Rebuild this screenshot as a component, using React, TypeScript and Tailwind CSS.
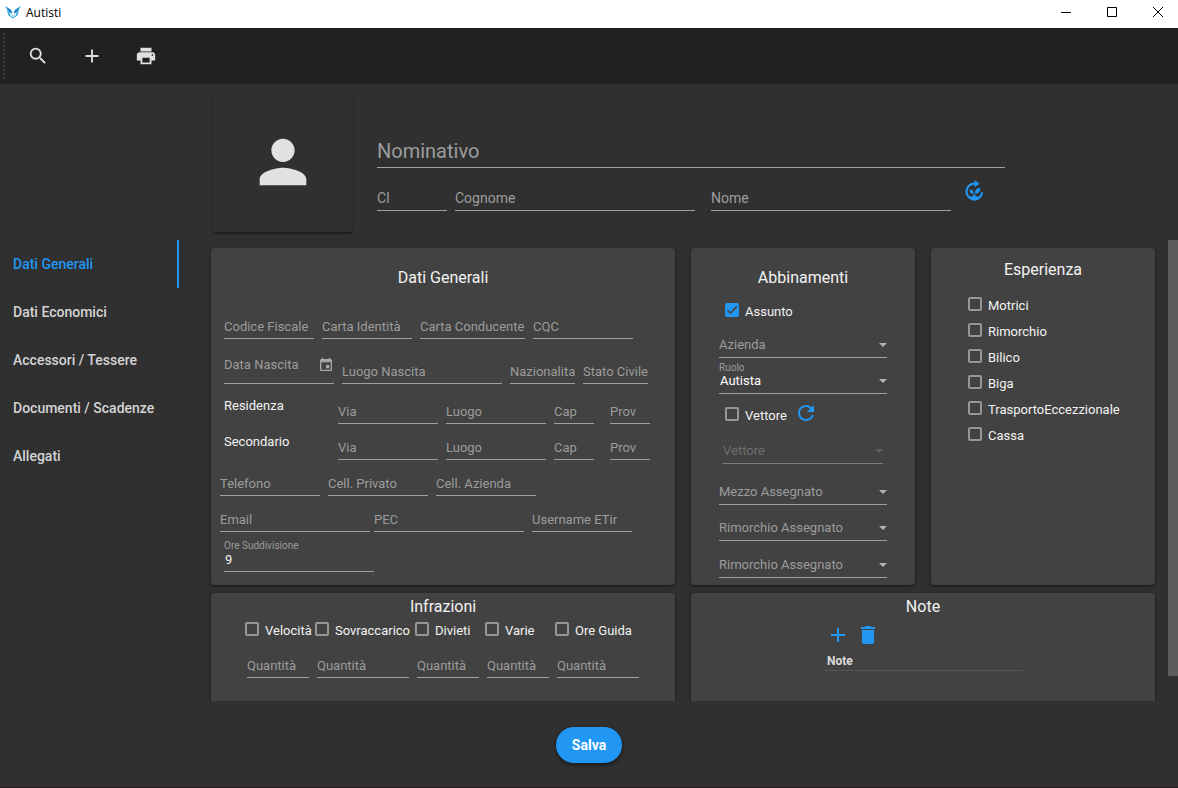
import { useState, type ReactNode } from "react";
import { MdAdd, MdDelete, MdEvent, MdPerson, MdPrint, MdRefresh, MdSearch } from "react-icons/md";

const sections = [
  "Dati Generali",
  "Dati Economici",
  "Accessori / Tessere",
  "Documenti / Scadenze",
  "Allegati",
];

const experiences = ["Motrici", "Rimorchio", "Bilico", "Biga", "TrasportoEccezzionale", "Cassa"];

const infractions = ["Velocità", "Sovraccarico", "Divieti", "Varie", "Ore Guida"];

function Field({ label, name, className = "" }: { label: string; name?: string; className?: string }) {
  return (
    <input
      type="text"
      aria-label={name ?? label}
      placeholder={label}
      className={`h-[23px] min-w-0 border-b border-[#a0a0a0] bg-transparent pb-0.5 leading-5 text-white outline-none placeholder:text-[#9c9c9c] placeholder:opacity-100 ${className}`}
    />
  );
}

function Check({ label, defaultChecked = false }: { label: string; defaultChecked?: boolean }) {
  return (
    <label className="flex items-center gap-1.5 whitespace-nowrap pt-0.5 leading-[18px]">
      <span className="mb-1 grid">
        <input
          type="checkbox"
          defaultChecked={defaultChecked}
          className="peer col-start-1 row-start-1 size-3.5 appearance-none rounded-xs border-2 border-[#969696] checked:border-[#2196f3] checked:bg-[#2196f3]"
        />
        <svg
          viewBox="0 0 14 14"
          fill="none"
          stroke="#424242"
          strokeWidth="1.6"
          className="pointer-events-none invisible col-start-1 row-start-1 size-3.5 peer-checked:visible"
        >
          <path d="M2.5 7.2 5.4 10.2 11.8 3.6" />
        </svg>
      </span>
      {label}
    </label>
  );
}

function Picker({
  label,
  value,
  name,
  disabled = false,
}: {
  label: string;
  value?: string;
  name: string;
  disabled?: boolean;
}) {
  return (
    <div
      className={`flex flex-col border-b ${
        disabled ? "mx-1 border-[#7c7c7c] text-[#6f6f6f]" : "border-[#a0a0a0] text-[#9c9c9c]"
      }`}
    >
      {value && (
        <label htmlFor={name} className="-mb-0.5 text-[10px] leading-[10px]">
          {label}
        </label>
      )}
      <div className="grid items-center">
        <select
          id={name}
          disabled={disabled}
          aria-label={value ? undefined : name}
          className={`col-start-1 row-start-1 h-[22px] appearance-none bg-transparent pb-0.5 leading-5 outline-none disabled:opacity-100 ${
            value ? "pl-px text-white" : ""
          }`}
        >
          <option>{value ?? label}</option>
        </select>
        <svg
          viewBox="0 0 8 4"
          className="pointer-events-none col-start-1 row-start-1 mb-0.5 h-1 w-2 justify-self-end"
          fill={disabled ? "#5c6468" : "#b4b4b4"}
        >
          <path d="M0 0h8L4 4z" />
        </svg>
      </div>
    </div>
  );
}

function Card({ title, className = "", children }: { title: string; className?: string; children: ReactNode }) {
  return (
    <section className={`rounded-sm bg-[#424242] shadow-[0_1px_3px_rgba(0,0,0,0.55)] ${className}`}>
      <h2 className="text-center text-base leading-7">{title}</h2>
      {children}
    </section>
  );
}

function Address({ title }: { title: string }) {
  return (
    <>
      <span className="w-[114px] pb-2 leading-5">{title}</span>
      <Field label="Via" name={`${title} via`} className="mr-2 w-[100px]" />
      <Field label="Luogo" name={`${title} luogo`} className="mr-2 w-[100px]" />
      <Field label="Cap" name={`${title} cap`} className="mr-4 w-10" />
      <Field label="Prov" name={`${title} provincia`} className="w-10" />
    </>
  );
}

function SproutCycle() {
  return (
    <svg viewBox="0 0 19 21" className="h-[21px] w-[19px]" fill="currentColor">
      <path
        d="M9.8 3.6A7.9 7.9 0 1 0 17.2 12.4"
        fill="none"
        stroke="currentColor"
        strokeWidth="2.2"
      />
      <path d="M9.6 0 14.4 3.7 9.6 7.4z" />
      <path d="M3.2 16.4h4.2q1.1-.2 1.1-2.2h1.7q0 2 1.1 2.2h4.2Q13 20.4 9.3 20.4T3.2 16.4z" />
      <path d="M4.6 9.4q4-.1 4.3 4.4-4.3.2-4.3-4.4z" />
      <path d="M15.3 7.7q.5 6-5.4 6.1-.2-6 5.4-6.1z" />
    </svg>
  );
}

function TitleBar() {
  return (
    <header className="flex h-7 shrink-0 items-center bg-white text-black">
      <svg viewBox="0 0 16 13" className="mb-1 ml-[5px] h-[13px] w-4">
        <path d="M0 0 5.6 3.6 7.4 6.2 6.2 7.4 4.2 6.2z" fill="#1b86cf" />
        <path d="M16 0 10.4 3.6 8.6 6.2 9.8 7.4 11.8 6.2z" fill="#1b86cf" />
        <path d="M1.6 3.4 4.2 6.2 5.4 9.8 8 11.2 10.6 9.8 11.8 6.2 14.4 3.4 12.4 9.4 8 12.4 3.6 9.4z" fill="#2fa3dc" />
        <path d="M5.4 7.2 8 9.2 10.6 7.2 10 9.8 8 11.2 6 9.8z" fill="#a9def3" />
      </svg>
      <h1 className="ml-[5px] flex-1 pb-0.5 font-['Open_Sans',sans-serif] text-xs">Autisti</h1>
      <div className="flex gap-1.5">
        <button aria-label="Riduci" className="flex h-7 w-10 items-center justify-center">
          <svg viewBox="0 0 10 10" className="mb-1 size-2.5" stroke="#000" fill="none">
            <path d="M0 5.5h10" />
          </svg>
        </button>
        <button aria-label="Ingrandisci" className="flex h-7 w-10 items-center justify-center">
          <svg viewBox="0 0 10 10" className="mb-1 size-2.5" stroke="#000" fill="none">
            <path d="M.5.5h9v9h-9z" />
          </svg>
        </button>
        <button aria-label="Chiudi" className="flex h-7 w-10 items-center justify-center">
          <svg viewBox="0 0 10 10" className="mb-1 size-2.5" stroke="#000" fill="none">
            <path d="m0 0 10 10M10 0 0 10" />
          </svg>
        </button>
      </div>
    </header>
  );
}

export default function App() {
  const [active, setActive] = useState(sections[0]);

  return (
    <div className="flex h-screen flex-col bg-[#303030] font-['Roboto',sans-serif] text-[13px] text-[#f2f2f2]">
      <TitleBar />

      <div role="toolbar" className="flex h-14 shrink-0 items-center bg-[#212121] text-[#e0e0e0]">
        <div className="ml-[3px] mr-1.5 h-[46px] w-0.5 bg-[repeating-linear-gradient(to_bottom,#404040_0,#404040_2px,transparent_2px,transparent_4px)]" />
        <button aria-label="Cerca" className="flex h-14 w-[54px] items-center justify-center">
          <MdSearch className="size-[22px]" />
        </button>
        <button aria-label="Aggiungi" className="flex h-14 w-[54px] items-center justify-center">
          <MdAdd className="size-[22px]" />
        </button>
        <button aria-label="Stampa" className="flex h-14 w-[54px] items-center justify-center">
          <MdPrint className="size-[22px]" />
        </button>
      </div>

      <div className="flex shrink-0 gap-6 pb-2 pl-[213px] pt-2">
        <div className="flex size-[140px] items-center justify-center rounded-sm text-[#e2e2e2] shadow-[0_2px_2px_rgba(0,0,0,0.4)]">
          <MdPerson className="size-[70px]" />
        </div>
        <div className="flex flex-col pt-11 text-sm">
          <input
            type="text"
            aria-label="Nominativo"
            placeholder="Nominativo"
            className="h-8 w-[628px] border-b border-[#a0a0a0] bg-transparent pb-0.5 text-xl leading-7 outline-none placeholder:text-[#9c9c9c] placeholder:opacity-100"
          />
          <div className="flex h-[43px] items-end">
            <Field label="CI" className="mr-2 w-[70px]" />
            <Field label="Cognome" className="mr-4 w-60" />
            <Field label="Nome" className="mr-3.5 w-60" />
            <button aria-label="Rigenera" className="mb-2.5 text-[#2196f3]">
              <SproutCycle />
            </button>
          </div>
        </div>
      </div>

      <div className="flex min-h-0 flex-1">
        <nav className="flex w-[179px] shrink-0 flex-col">
          {sections.map((s) => (
            <button
              key={s}
              onClick={() => setActive(s)}
              className={`h-12 border-r-2 pl-[13px] text-left text-sm font-medium ${
                s === active ? "border-[#2196f3] text-[#2196f3]" : "border-transparent text-[#d4d4d4]"
              }`}
            >
              {s}
            </button>
          ))}
        </nav>

        <main className="grid min-w-0 flex-1 grid-cols-[464fr_224fr_224fr] content-start gap-x-4 gap-y-2 overflow-hidden pl-8 pr-[13px] pt-2">
          <Card title="Dati Generali" className="px-[9px] pb-[13px] pt-4">
            <div className="flex h-[47px] items-end gap-2 pl-1">
              <Field label="Codice Fiscale" className="w-[90px]" />
              <Field label="Carta Identità" className="w-[90px]" />
              <Field label="Carta Conducente" className="w-[105px]" />
              <Field label="CQC" className="w-[100px]" />
            </div>
            <div className="flex h-[45px] items-end gap-2 pl-1">
              <div className="flex w-[110px] items-center border-b border-[#a0a0a0] pb-2">
                <input
                  type="text"
                  aria-label="Data Nascita"
                  placeholder="Data Nascita"
                  className="min-w-0 flex-1 bg-transparent leading-5 outline-none placeholder:text-[#9c9c9c] placeholder:opacity-100"
                />
                <button aria-label="Apri calendario" className="text-[#a6a6a6]">
                  <MdEvent className="size-4" />
                </button>
              </div>
              <Field label="Luogo Nascita" className="w-40" />
              <Field label="Nazionalita" className="w-[65px]" />
              <Field label="Stato Civile" className="w-[65px]" />
            </div>
            <div className="flex h-10 items-end pl-1">
              <Address title="Residenza" />
            </div>
            <div className="flex h-9 items-end pl-1">
              <Address title="Secondario" />
            </div>
            <div className="flex h-9 items-end gap-2">
              <Field label="Telefono" className="w-[100px]" />
              <Field label="Cell. Privato" className="w-[100px]" />
              <Field label="Cell. Azienda" className="w-[100px]" />
            </div>
            <div className="flex h-9 items-end">
              <Field label="Email" className="mr-1 w-[150px]" />
              <Field label="PEC" className="mr-2 w-[150px]" />
              <Field label="Username ETir" className="w-[100px]" />
            </div>
            <div className="flex h-10 flex-col items-start justify-end pl-1">
              <label htmlFor="ore" className="-mb-0.5 text-[10px] leading-[10px] text-[#9c9c9c]">
                Ore Suddivisione
              </label>
              <input
                id="ore"
                type="text"
                defaultValue="9"
                className="h-[23px] w-[150px] border-b border-[#a0a0a0] bg-transparent pb-0.5 pl-px leading-5 outline-none"
              />
            </div>
          </Card>

          <Card title="Abbinamenti" className="px-7 pb-[7px] pt-4">
            <div className="flex h-9 items-center pl-1.5 pt-0.5">
              <Check label="Assunto" defaultChecked />
            </div>
            <div className="flex h-[30px] flex-col justify-end">
              <Picker label="Azienda" name="azienda" />
            </div>
            <div className="flex h-9 flex-col justify-end">
              <Picker label="Ruolo" value="Autista" name="ruolo" />
            </div>
            <div className="flex h-[42px] items-center gap-[7px] pl-1.5">
              <Check label="Vettore" />
              <button aria-label="Aggiorna" className="mb-1 text-[#2196f3]">
                <MdRefresh className="size-6" />
              </button>
            </div>
            <div className="flex h-7 flex-col justify-end">
              <Picker label="Vettore" name="vettore" disabled />
            </div>
            <div className="flex h-[41px] flex-col justify-end">
              <Picker label="Mezzo Assegnato" name="mezzo" />
            </div>
            <div className="flex h-9 flex-col justify-end">
              <Picker label="Rimorchio Assegnato" name="rimorchio-1" />
            </div>
            <div className="flex h-[37px] flex-col justify-end">
              <Picker label="Rimorchio Assegnato" name="rimorchio-2" />
            </div>
          </Card>

          <Card title="Esperienza" className="pt-2">
            <div className="flex flex-col pl-[37px] pt-2">
              {experiences.map((e) => (
                <div key={e} className="flex h-[26px] items-center">
                  <Check label={e} />
                </div>
              ))}
            </div>
          </Card>

          <Card title="Infrazioni" className="h-40">
            <div className="grid grid-cols-[70px_100px_70px_70px_90px] justify-center">
              {infractions.map((i) => (
                <div key={i} className="flex flex-col">
                  <div className="flex h-[18px] items-center pl-0.5">
                    <Check label={i} />
                  </div>
                  <Field label="Quantità" name={`Quantità ${i}`} className="mx-1 mt-4" />
                </div>
              ))}
            </div>
          </Card>

          <Card title="Note" className="col-span-2 h-40">
            <div className="mx-auto w-[200px]">
              <div className="flex gap-1.5 pl-[3px] pt-0.5 text-[#2196f3]">
                <button aria-label="Aggiungi nota">
                  <MdAdd className="size-6" />
                </button>
                <button aria-label="Elimina nota">
                  <MdDelete className="size-6" />
                </button>
              </div>
              <table className="w-full">
                <thead>
                  <tr className="border-b border-[#555555]">
                    <th className="h-[23px] pl-1 pt-1.5 text-left text-xs font-bold leading-4 text-[#dcdcdc]">Note</th>
                  </tr>
                </thead>
              </table>
            </div>
          </Card>
        </main>

        <div className="w-2.5 shrink-0">
          <div className="h-[94.5%] bg-[#5d5d5d]" />
        </div>
      </div>

      <footer className="flex h-[87px] shrink-0 items-center justify-center border-b border-[#231f20] pt-0.5">
        <button className="h-9 rounded-full bg-[#2196f3] px-4 text-sm font-bold text-white shadow-[0_2px_4px_rgba(0,0,0,0.5)]">
          Salva
        </button>
      </footer>
    </div>
  );
}
